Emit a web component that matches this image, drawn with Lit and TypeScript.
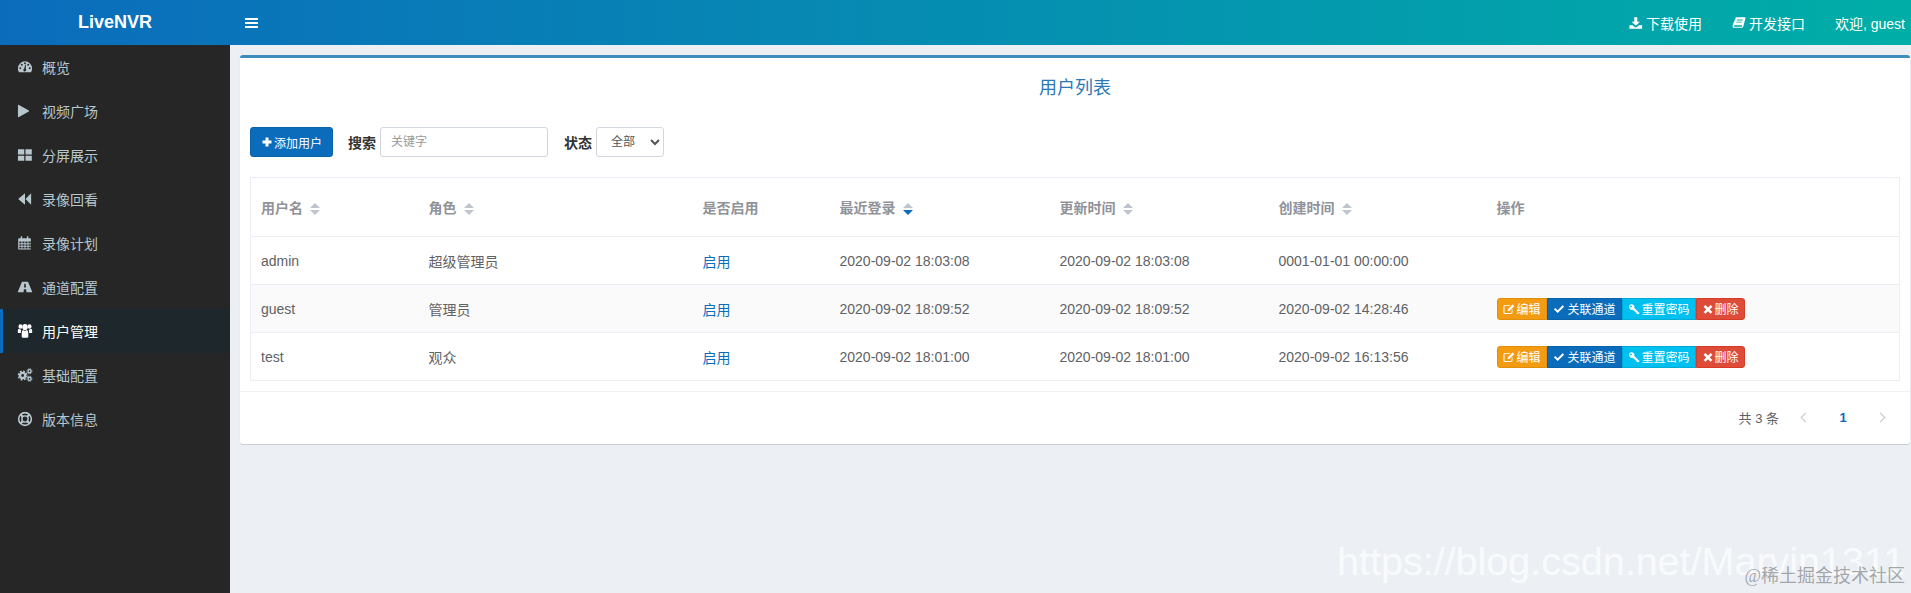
import { LitElement, html, css, svg } from 'lit';
import { customElement } from 'lit/decorators.js';

const icons: Record<string, unknown> = {
  dashboard: svg`<path fill-rule="evenodd" d="M8 2a7.500 7.500 0 0 0-7.500 7.500c0 1.400.4 2.700 1 3.700.1.2.3.3.5.3h12c.2 0 .4-.1.5-.3.6-1 1-2.300 1-3.700A7.500 7.500 0 0 0 8 2zM3 10.200a1 1 0 1 1 0-2 1 1 0 0 1 0 2zm1.600-3.600a1 1 0 1 1 0-2 1 1 0 0 1 0 2zM8 5a1 1 0 1 1 0-2 1 1 0 0 1 0 2zm1.200 6.200a1.500 1.500 0 1 1-2.100-1.400l1.200-4.300h.8l-.4 4.400c.3.3.5.8.5 1.300zM13 10.200a1 1 0 1 1 0-2 1 1 0 0 1 0 2zm-1.600-3.600a1 1 0 1 1 0-2 1 1 0 0 1 0 2z"/>`,
  play: svg`<path d="M.5 1.800v12.400c0 .4.300.5.600.3L12.100 8.400c.3-.2.3-.6 0-.8L1.100 1.500C.8 1.300.5 1.400.5 1.800z"/>`,
  grid: svg`<path d="M.5 2h6.700v5.500H.5zM8.500 2h6.700v5.500H8.500zM.5 8.700h6.700v5.500H.5zM8.500 8.700h6.700v5.500H8.500z"/>`,
  backward: svg`<path d="M8 1.800.8 8 8 14.200zM14.500 1.800 8.500 8l6 6.200z"/>`,
  calendar: svg`<path fill-rule="evenodd" d="M1.500 3h2V.8h1.500V3h5V.8h1.500V3h2c.4 0 .7.3.7.7v10.600c0 .4-.3.700-.7.700h-12c-.4 0-.7-.3-.7-.7V3.700c0-.4.3-.7.700-.7zM2 6.500v1.700h2.300V6.500zm3.300 0v1.700h2.200V6.500zm3.200 0v1.700h2.200V6.500zm3.200 0v1.700H14V6.500zM2 9.200v1.700h2.300V9.200zm3.300 0v1.700h2.200V9.200zm3.200 0v1.700h2.200V9.200zm3.200 0v1.700H14V9.200zM2 11.900v2h2.300v-2zm3.300 0v2h2.200v-2zm3.200 0v2h2.200v-2zm3.200 0v2H14v-2z"/>`,
  road: svg`<path fill-rule="evenodd" d="M4.800 2.500H11.200L15.800 13.500H9.500L9.200 10.500H6.800L6.500 13.500H.2zM7.300 4.500 7 8.500H9L8.700 4.500z"/>`,
  users: svg`<g transform="translate(0 -1.400) scale(1 1.150)"><circle cx="3.200" cy="4" r="2.100"/><circle cx="12.800" cy="4" r="2.100"/><circle cx="8" cy="4.600" r="2.900"/><path d="M.2 9c0-2 .6-2.900 1.700-2.900.5.6 1.200.9 2.100.9-.3.800-.4 1.800-.4 3H1.500C.7 10 .2 9.700.2 9zM15.800 9c0-2-.6-2.900-1.700-2.900-.5.6-1.200.9-2.100.9.3.8.4 1.800.4 3h2.100c.8 0 1.300-.3 1.300-1zM4.500 11c0-2.500.7-3.800 1.700-3.800.5.500 1.100.8 1.800.8s1.300-.3 1.800-.8c1 0 1.700 1.300 1.700 3.800v2.300c0 .6-.4 1-1 1H5.500c-.6 0-1-.4-1-1z"/></g>`,
  cogs: svg`<g fill="none" stroke="currentColor"><circle cx="5.500" cy="8.500" r="2.700" stroke-width="2.400"/><circle cx="5.500" cy="8.500" r="4.600" stroke-width="1.500" stroke-dasharray="2 1.600"/><circle cx="12.800" cy="4" r="1.600" stroke-width="1.400"/><circle cx="12.800" cy="4" r="2.700" stroke-width="1" stroke-dasharray="1.200 1"/><circle cx="12.800" cy="12" r="1.600" stroke-width="1.400"/><circle cx="12.800" cy="12" r="2.700" stroke-width="1" stroke-dasharray="1.200 1"/></g>`,
  lifering: svg`<g fill="none" stroke="currentColor"><circle cx="8" cy="8" r="6.700" stroke-width="1.700"/><circle cx="8" cy="8" r="3.300" stroke-width="1.500"/><path stroke-width="2.400" d="M3.200 3.200 5.600 5.600M12.800 3.200 10.400 5.600M3.200 12.800 5.600 10.400M12.800 12.800 10.400 10.400"/></g>`,
  download: svg`<path d="M6 1.500h3.500v5H12.500L7.750 11 3 6.500H6zM.5 10.500h3.600l2.300 2c.8.700 1.900.7 2.700 0l2.300-2H15v4H.5z"/>`,
  book: svg`<path fill-rule="evenodd" d="M4.500 1.500H14.600c.8 0 1 .6.8 1.200L12.800 12.300c-.2.800-.8 1.200-1.600 1.200H2.400C1.200 13.500.5 12.700.7 11.200.8 10.600.9 10.100 1 9.800zM5.800 4 5.500 5H12l.3-1zM5 6.500 4.700 7.500H11.200L11.500 6.500zM2.900 10.500C2.300 10.500 2 11 2 11.400 2 12 2.400 12.400 3 12.400H11.100L11.700 10.500z"/>`,
  plus: svg`<path d="M6 2h3.500c.3 0 .5.2.5.5V6h3.500c.3 0 .5.2.5.5V9.500c0 .3-.2.5-.5.5H10v3.500c0 .3-.2.500-.5.500H6.500c-.3 0-.5-.2-.5-.5V10H2.500C2.200 10 2 9.800 2 9.500V6.500C2 6.200 2.200 6 2.500 6H6V2.500C6 2.200 6.200 2 6.500 2z"/>`,
  edit: svg`<path fill-rule="evenodd" d="M2.800 2.500H10L8.800 3.800H3c-.6 0-1 .4-1 1v7.400c0 .6.4 1 1 1h7.400c.6 0 1-.4 1-1V9.500l1.300-1.200v4.100c0 1.300-1 2.300-2.300 2.300H2.800C1.500 14.700.5 13.700.5 12.400V4.800C.5 3.500 1.500 2.500 2.800 2.500zM12.800 2 15 4.200 8.500 10.700H6.300V8.500z"/>`,
  check: svg`<path d="M1.200 8.300 3 6.500 6.200 9.700 12.900 3 14.800 4.900 6.200 13.400z"/>`,
  key: svg`<path fill-rule="evenodd" d="M4.800 1.500a3.800 3.800 0 0 1 3.600 5L15 13v1.500h-3l-.8-.8V12.500H10V11.300H8.800L6.400 8.900A3.800 3.800 0 1 1 4.800 1.500zM4 3.300a1.200 1.200 0 1 0 0 2.400 1.200 1.200 0 0 0 0-2.400z"/>`,
  times: svg`<path d="M4.500 2.600 8 6.100l3.500-3.500 2.400 2.400L10.400 8.500l3.500 3.500-2.400 2.400L8 10.900l-3.500 3.500L2.100 12l3.500-3.500L2.100 5z"/>`,
};

const icon = (name: string) =>
  html`<svg class="ico" viewBox="0 0 16 16" fill="currentColor">${icons[name]}</svg>`;

const menu = [
  ['dashboard', '概览'],
  ['play', '视频广场'],
  ['grid', '分屏展示'],
  ['backward', '录像回看'],
  ['calendar', '录像计划'],
  ['road', '通道配置'],
  ['users', '用户管理'],
  ['cogs', '基础配置'],
  ['lifering', '版本信息'],
];

const rows = [
  { name: 'admin', role: '超级管理员', login: '2020-09-02 18:03:08', update: '2020-09-02 18:03:08', create: '0001-01-01 00:00:00', ops: false },
  { name: 'guest', role: '管理员', login: '2020-09-02 18:09:52', update: '2020-09-02 18:09:52', create: '2020-09-02 14:28:46', ops: true },
  { name: 'test', role: '观众', login: '2020-09-02 18:01:00', update: '2020-09-02 18:01:00', create: '2020-09-02 16:13:56', ops: true },
];

@customElement('app-root')
export class AppRoot extends LitElement {
  static styles = css`
    :host {
      display: flex;
      flex-direction: column;
      position: relative;
      height: 593px;
      overflow: hidden;
      background: #ecf0f5;
      font-family: 'Liberation Sans', 'Noto Sans CJK SC', sans-serif;
      font-size: 14px;
      color: #606266;
    }

    .ico {
      width: 14px;
      height: 14px;
      flex: none;
    }

    /* top bar */
    .top {
      display: flex;
      align-items: center;
      height: 45px;
      flex: none;
      color: #fff;
      background: linear-gradient(90deg, #0b6cbc, #00aea7);
    }
    .logo {
      width: 230px;
      text-align: center;
      font-size: 18px;
      font-weight: bold;
    }
    .bars {
      display: flex;
      flex-direction: column;
      gap: 2px;
      width: 13px;
      margin-left: 15px;
    }
    .bars i {
      height: 2px;
      background: #fff;
    }
    .nav {
      display: flex;
      align-items: center;
      gap: 30px;
      margin-left: auto;
      padding-right: 6px;
    }
    .nav span {
      display: flex;
      align-items: center;
      gap: 3px;
    }

    .body {
      display: flex;
      flex: 1;
      min-height: 0;
    }

    /* sidebar */
    aside {
      width: 230px;
      flex: none;
      background: #262626;
      color: #b8c7ce;
    }
    .item {
      display: flex;
      align-items: center;
      gap: 10px;
      height: 44px;
      padding-left: 18px;
      box-sizing: border-box;
    }
    .item .ico {
      width: 14px;
      height: 14px;
      transform: scale(1.08);
    }
    .item.on {
      padding-left: 15px;
      border-left: 3px solid #0b6cbc;
      background: #1e282c;
      color: #fff;
    }

    /* content */
    main {
      flex: 1;
      min-width: 0;
      padding: 10px 1px 0 10px;
    }
    .box {
      background: #fff;
      border-top: 3px solid #3c8dbc;
      border-radius: 3px;
      box-shadow: 0 1px 1px rgba(0, 0, 0, 0.15);
    }
    .title {
      height: 60px;
      line-height: 60px;
      text-align: center;
      font-size: 18px;
      color: #2b78b8;
    }
    .tools {
      display: flex;
      align-items: center;
      height: 30px;
      margin: 9px 10px 20px;
    }
    .add {
      display: flex;
      align-items: center;
      justify-content: center;
      gap: 1px;
      width: 83px;
      height: 30px;
      box-sizing: border-box;
      border: 1px solid #0a62aa;
      border-radius: 3px;
      background: #0b6cbc;
      color: #fff;
      font: inherit;
      font-size: 12px;
      padding: 0;
    }
    .add .ico {
      width: 12px;
      height: 12px;
    }
    label {
      font-weight: bold;
      color: #333;
    }
    .lb1 {
      margin-left: 15px;
      margin-right: 4px;
    }
    .lb2 {
      margin-left: 16px;
      margin-right: 4px;
    }
    input {
      width: 168px;
      height: 30px;
      box-sizing: border-box;
      padding: 0 10px;
      border: 1px solid #d2d6de;
      border-radius: 3px;
      font: inherit;
      font-size: 12px;
      outline: none;
    }
    input::placeholder {
      color: #999;
    }
    select {
      width: 68px;
      height: 30px;
      box-sizing: border-box;
      padding: 0 10px;
      border: 1px solid #d2d6de;
      border-radius: 3px;
      background: #fff;
      color: #555;
      font: inherit;
      font-size: 12px;
    }

    /* table */
    .wrap {
      margin: 0 10px;
    }
    table {
      width: 100%;
      table-layout: fixed;
      border-collapse: collapse;
      border: 1px solid #ebeef5;
    }
    th,
    td {
      box-sizing: border-box;
      padding: 0 10px;
      text-align: left;
      border-bottom: 1px solid #ebeef5;
      white-space: nowrap;
    }
    th {
      height: 59px;
      color: #909399;
      font-weight: bold;
    }
    td {
      height: 48px;
    }
    tr.odd td {
      background: #fafafa;
    }
    .c1 { width: 168px; }
    .c2 { width: 274px; }
    .c3 { width: 137px; }
    .c4 { width: 220px; }
    .c5 { width: 219px; }
    .c6 { width: 218px; }
    .link {
      color: #0b6cbc;
    }
    .sort {
      display: inline-flex;
      flex-direction: column;
      gap: 2px;
      margin-left: 7px;
      vertical-align: middle;
    }
    .sort i {
      width: 0;
      height: 0;
      border-left: 5px solid transparent;
      border-right: 5px solid transparent;
    }
    .sort .up {
      border-bottom: 5px solid #c0c4cc;
    }
    .sort .down {
      border-top: 5px solid #c0c4cc;
    }
    .sort .down.active {
      border-top-color: #0b6cbc;
    }
    .ops {
      display: flex;
    }
    .btn {
      display: flex;
      align-items: center;
      gap: 2px;
      height: 22px;
      box-sizing: border-box;
      padding: 0 5px;
      border: 1px solid;
      color: #fff;
      font-size: 12px;
    }
    .btn .ico {
      width: 12px;
      height: 12px;
    }
    .btn.edit {
      background: #f39c12;
      border-color: #e08e0b;
      border-radius: 3px 0 0 3px;
    }
    .btn.bind {
      gap: 3px;
      background: #0b6cbc;
      border-color: #0a62aa;
    }
    .btn.reset {
      background: #00c0ef;
      border-color: #00acd6;
    }
    .btn.del {
      gap: 1px;
      background: #dd4b39;
      border-color: #d73925;
      border-radius: 0 3px 3px 0;
    }

    /* pagination */
    .foot {
      display: flex;
      align-items: center;
      justify-content: flex-end;
      height: 50px;
      padding-bottom: 2px;
      margin-top: 10px;
      border-top: 1px solid #f0f0f0;
      font-size: 13px;
      color: #606266;
    }
    .pg {
      width: 60px;
      margin: 0 4px;
      text-align: center;
      color: #0b6cbc;
      font-weight: bold;
    }
    .arrow {
      width: 7px;
      height: 7px;
      box-sizing: border-box;
      border-left: 1.5px solid #c0c4cc;
      border-bottom: 1.5px solid #c0c4cc;
      transform: rotate(45deg);
    }
    .arrow.next {
      transform: rotate(225deg);
      margin-right: 26px;
    }
    .arrow.prev {
      margin-left: 23px;
    }

    /* image watermarks */
    .mark {
      position: absolute;
      right: 6px;
      bottom: 12px;
      font-size: 39.5px;
      line-height: 1;
      color: rgba(255, 255, 255, 0.72);
      white-space: nowrap;
    }
    .mark2 {
      position: absolute;
      right: 6px;
      bottom: 7px;
      font-family: 'Liberation Serif', 'Noto Sans CJK SC', serif;
      font-size: 18px;
      line-height: 20px;
      color: rgba(100, 100, 100, 0.55);
      white-space: nowrap;
    }
  `;

  private sort(active = false) {
    return html`<span class="sort"><i class="up"></i><i class="down ${active ? 'active' : ''}"></i></span>`;
  }

  render() {
    return html`
      <header class="top">
        <div class="logo">LiveNVR</div>
        <div class="bars"><i></i><i></i><i></i></div>
        <div class="nav">
          <span>${icon('download')} 下载使用</span>
          <span>${icon('book')} 开发接口</span>
          <span>欢迎, guest</span>
        </div>
      </header>
      <div class="body">
        <aside>
          ${menu.map(
            ([ico, text]) => html`
              <div class="item ${text === '用户管理' ? 'on' : ''}">${icon(ico)}<span>${text}</span></div>
            `
          )}
        </aside>
        <main>
          <section class="box">
            <div class="title">用户列表</div>
            <div class="tools">
              <button class="add">${icon('plus')}添加用户</button>
              <label class="lb1">搜索</label>
              <input placeholder="关键字" />
              <label class="lb2">状态</label>
              <select><option>全部</option></select>
            </div>
            <div class="wrap">
              <table>
                <thead>
                  <tr>
                    <th class="c1">用户名${this.sort()}</th>
                    <th class="c2">角色${this.sort()}</th>
                    <th class="c3">是否启用</th>
                    <th class="c4">最近登录${this.sort(true)}</th>
                    <th class="c5">更新时间${this.sort()}</th>
                    <th class="c6">创建时间${this.sort()}</th>
                    <th>操作</th>
                  </tr>
                </thead>
                <tbody>
                  ${rows.map(
                    (r, i) => html`
                      <tr class=${i % 2 ? 'odd' : ''}>
                        <td>${r.name}</td>
                        <td>${r.role}</td>
                        <td><span class="link">启用</span></td>
                        <td>${r.login}</td>
                        <td>${r.update}</td>
                        <td>${r.create}</td>
                        <td>
                          ${r.ops
                            ? html`<div class="ops">
                                <span class="btn edit">${icon('edit')}编辑</span>
                                <span class="btn bind">${icon('check')}关联通道</span>
                                <span class="btn reset">${icon('key')}重置密码</span>
                                <span class="btn del">${icon('times')}删除</span>
                              </div>`
                            : ''}
                        </td>
                      </tr>
                    `
                  )}
                </tbody>
              </table>
            </div>
            <div class="foot">
              <span>共 3 条</span>
              <i class="arrow prev"></i>
              <span class="pg">1</span>
              <i class="arrow next"></i>
            </div>
          </section>
        </main>
      </div>
      <div class="mark">https://blog.csdn.net/Marvin1311</div>
      <div class="mark2">@稀土掘金技术社区</div>
    `;
  }
}
